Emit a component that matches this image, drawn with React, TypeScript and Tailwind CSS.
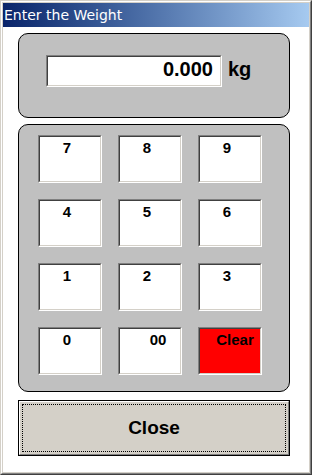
import { useState } from 'react';

const keys = [
  { label: '7', pad: 'pr-[6px]' },
  { label: '8', pad: 'pr-[6px]' },
  { label: '9', pad: 'pr-[6px]' },
  { label: '4', pad: 'pr-[6px]' },
  { label: '5', pad: 'pr-[6px]' },
  { label: '6', pad: 'pr-[6px]' },
  { label: '1', pad: 'pr-[6px]' },
  { label: '2', pad: 'pr-[6px]' },
  { label: '3', pad: 'pr-[6px]' },
  { label: '0', pad: 'pr-[6px]' },
  { label: '00', pad: 'pl-[16px]' },
  { label: 'Clear', pad: 'pl-[10px]' },
];

function Key({ label, pad, onPress }: { label: string; pad: string; onPress: () => void }) {
  const isClear = label === 'Clear';
  return (
    <button
      onClick={onPress}
      className="w-[64px] h-[48px] border border-t-[#808080] border-l-[#808080] border-r-white border-b-white p-0"
    >
      <div
        className={`h-full border border-t-[#404040] border-l-[#404040] border-r-[#d4d0c8] border-b-[#d4d0c8] pt-[2px] text-center text-[15px] leading-[17px] font-bold text-black ${pad} ${
          isClear ? 'bg-[#ff0000]' : 'bg-white'
        }`}
      >
        {label}
      </div>
    </button>
  );
}

export default function App() {
  const [value, setValue] = useState('');

  const press = (label: string) => {
    if (label === 'Clear') {
      setValue('');
      return;
    }
    setValue((v) => (v + label).slice(0, 6));
  };

  const shown = (Number(value || '0') / 1000).toFixed(3);

  return (
    <div className="w-[312px] h-[475px] border border-t-[#d4d0c8] border-l-[#d4d0c8] border-r-[#404040] border-b-[#404040] font-['Liberation_Sans',Arial,sans-serif]">
      <div className="h-full border border-t-white border-l-white border-r-[#808080] border-b-[#808080]">
        <div className="h-full border border-[#d4d0c8] flex flex-col">
          {/* Title bar */}
          <div className="h-[24px] shrink-0 flex items-center pl-[1px] bg-gradient-to-r from-[#0a246a] to-[#a6caf0]">
            <span className="text-white text-[14px] leading-[16px] font-['DejaVu_Sans',sans-serif]">
              Enter the Weight
            </span>
          </div>

          {/* Client area */}
          <div className="flex-1 bg-white pl-[15px] pt-[6px]">
            {/* Display */}
            <div className="w-[272px] h-[85px] border border-black rounded-[10px] bg-[#c0c0c0] pl-[27px] pt-[21px] flex items-start">
              <div className="w-[176px] h-[32px] border border-t-[#808080] border-l-[#808080] border-r-white border-b-white">
                <div className="h-full border border-t-[#404040] border-l-[#404040] border-r-[#d4d0c8] border-b-[#d4d0c8] bg-white pt-[1px] pr-[7px] text-right text-[20px] leading-[23px] font-bold text-black">
                  {shown}
                </div>
              </div>
              <span className="ml-[6px] mt-[3px] text-[20px] leading-[23px] font-bold text-black">kg</span>
            </div>

            {/* Keypad */}
            <div className="mt-[6px] w-[272px] h-[268px] border border-black rounded-[10px] bg-[#c0c0c0] pl-[19px] pt-[10px]">
              <div className="grid grid-cols-[64px_64px_64px] gap-[16px]">
                {keys.map((k) => (
                  <Key key={k.label} label={k.label} pad={k.pad} onPress={() => press(k.label)} />
                ))}
              </div>
            </div>

            {/* Close */}
            <button className="mt-[8px] w-[272px] h-[56px] border border-black p-0 block">
              <div className="h-full border border-t-white border-l-white border-r-[#808080] border-b-[#808080] bg-[#d4d0c8] p-[2px]">
                <div className="h-full border border-dotted border-black flex items-center justify-center text-[19px] font-bold text-black">
                  Close
                </div>
              </div>
            </button>
          </div>
        </div>
      </div>
    </div>
  );
}
